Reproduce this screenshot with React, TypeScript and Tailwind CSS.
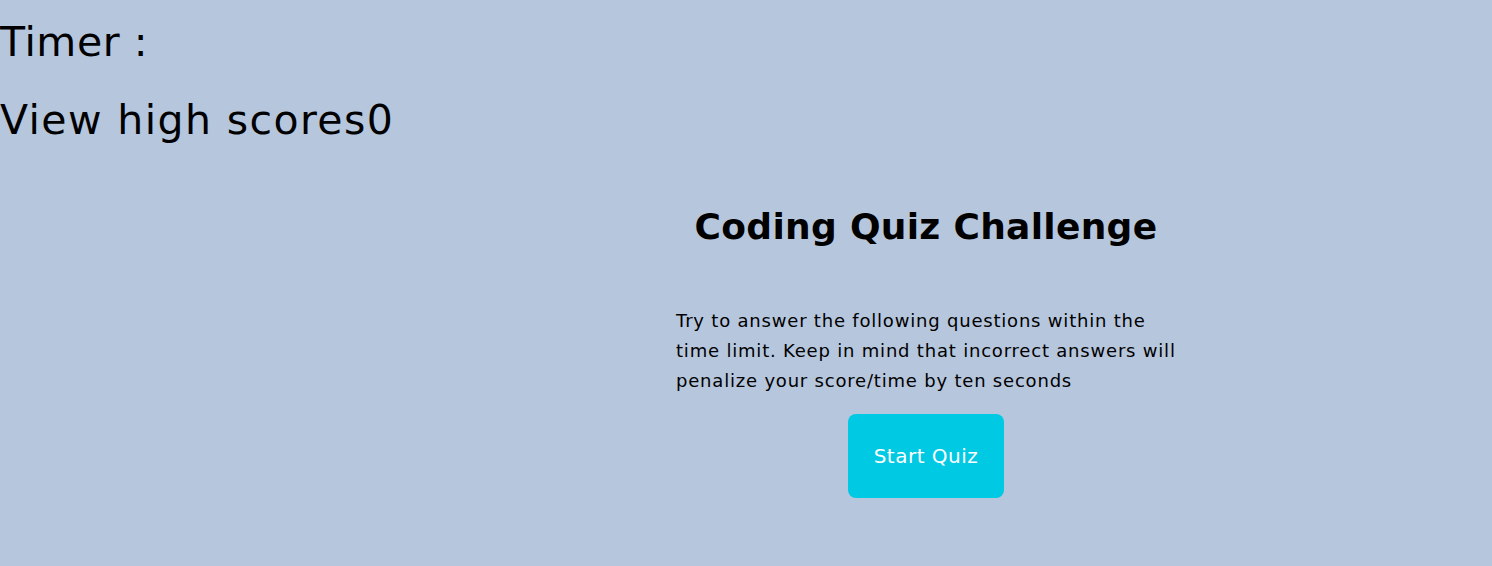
import React from 'react';

const App: React.FC = () => {
    return (
        <div className="min-h-screen w-full bg-[#b6c6dd] text-black font-['DejaVu_Sans',sans-serif] overflow-hidden">
            {/* Header */}
            <header className="pt-[12px]">
                <p className="text-[41px] leading-[60px] tracking-[0.6px]">Timer :</p>
                <p className="text-[41px] leading-[60px] mt-[18px] tracking-[1.4px]">View high scores<span>0</span></p>
            </header>

            {/* Quiz intro */}
            <main className="ml-[676px] w-[500px] mt-[52px] flex flex-col">
                <h1 className="text-center text-[36px] font-bold leading-[50px] tracking-[0.3px]">Coding Quiz Challenge</h1>
                <p className="mt-[54px] text-[18px] leading-[30px] tracking-[0.8px]">
                    Try to answer the following questions within the time limit. Keep in mind that incorrect answers will penalize your score/time by ten seconds
                </p>
                <div className="flex justify-center mt-[18px]">
                    <button className="w-[156px] h-[84px] rounded-lg bg-[#00c9e4] text-white text-[20px] tracking-[0.5px]">
                        Start Quiz
                    </button>
                </div>
            </main>
        </div>
    );
};

export default App;
